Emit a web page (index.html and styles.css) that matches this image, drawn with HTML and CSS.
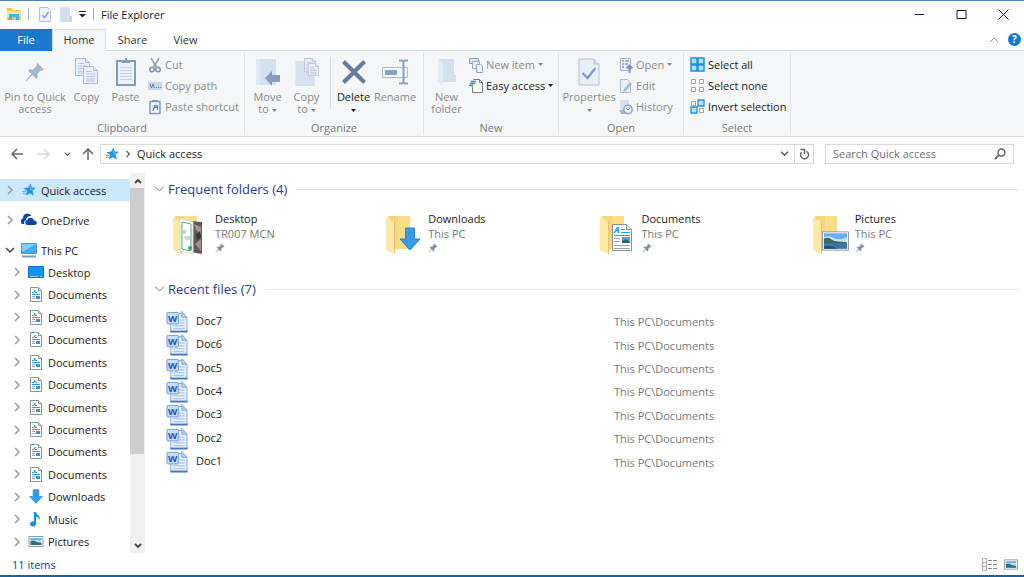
FILE: index.html
```html
<!DOCTYPE html>
<html lang="en">
<head>
    <meta charset="UTF-8">
    <meta name="viewport" content="width=device-width, initial-scale=1.0">
    <title>File Explorer</title>
    <link rel="stylesheet" href="styles.css">
</head>
<body>

<!-- icons used more than once -->
<svg class="sprite" aria-hidden="true">
    <symbol id="chevron" viewBox="0 0 8 10"><path d="M2 1l4 4-4 4" fill="none" stroke="currentColor" stroke-width="1.5"/></symbol>
    <symbol id="chevron-down" viewBox="0 0 10 8"><path d="M1 2l4 4 4-4" fill="none" stroke="currentColor" stroke-width="1.5"/></symbol>
    <symbol id="caret" viewBox="0 0 5 3"><path d="M0 0h5L2.5 3z" fill="currentColor"/></symbol>
    <symbol id="star" viewBox="0 0 14 14">
        <path d="M8.500.5l1.300 4 4 .2-3.300 3 1.300 5-4-2.500-4 2.500 1.200-4.700L1.500 5.200l4.700-.7z" fill="#2196e8"/>
        <path d="M8.300 2.500l.8 3.200 3 .2-4.200 1.600z" fill="#63bdf5"/>
        <path d="M0 8.500h4M1 10.500h3" stroke="#5fb4ee" stroke-width="1"/>
    </symbol>
    <symbol id="pin" viewBox="0 0 20 20">
        <path d="M12.500 1l6.500 6.500-2 1.200-1.200-.3-3.300 3.400.2 3.600-1.500 1.400-3.700-3.700L1.500 19l-.8-.6L6.500 12 3 8.600l1.500-1.300 3.700.2 3.300-3.400-.2-1.400z" fill="currentColor"/>
    </symbol>
    <symbol id="doc" viewBox="0 0 12 15">
        <path d="M.5.5h8l3 3v11H.5z" fill="#fff" stroke="#8b949b"/>
        <path d="M8.500.5v3h3" fill="#e4e8ea" stroke="#8b949b"/>
        <path d="M2 5.500h2l1-2.500v2.500h2M2 7.500h8" fill="none" stroke="#2f9be6"/>
        <path d="M6 9h4v3H6z" fill="#3f93cb"/>
        <path d="M2 9.500h3M2 11.500h3" stroke="#9aa5ac"/>
    </symbol>
    <symbol id="arrow-down" viewBox="0 0 22 24">
        <path d="M6.500 1h9v11h5.500L11 23 1 12h5.500z" fill="#379aea" stroke="#2484cf"/>
    </symbol>
    <symbol id="picture" viewBox="0 0 28 20">
        <path d="M.5.5h27v19H.5z" fill="#fff" stroke="#8e979e"/>
        <path d="M2 2h24v16H2z" fill="#6aaef0"/>
        <path d="M2 6q5-2 10 1t14-1v5H2z" fill="#c5e2f8"/>
        <path d="M2 7.500q4-2 7 .5t7 2.500 10 1v2H2z" fill="#3e6a5d"/>
        <path d="M2 12.500h24V18H2z" fill="#3879ad"/>
        <path d="M2 16q6-3 14 2H2z" fill="#23506c"/>
    </symbol>
    <symbol id="picture-small" viewBox="0 0 15 11">
        <path d="M.5.5h14v10H.5z" fill="#fff" stroke="#8e979e"/>
        <path d="M2 2h11v7H2z" fill="#b3dbf8"/>
        <path d="M2 2h11v2H2z" fill="#6db3ee"/>
        <path d="M2 5q4-1 6 1l5 1v2H2z" fill="#2f6d84"/>
    </symbol>
    <symbol id="folder" viewBox="0 0 26 40">
        <path d="M2 1h22v33H2z" fill="#f6d67a"/>
        <path d="M12 1h12v33H12z" fill="#f9dd89"/>
        <path d="M0 2l8 5v32l-8-4z" fill="#ffe9a6"/>
        <path d="M8 7v32l1-.5V6z" fill="#e8c265"/>
    </symbol>
    <symbol id="word" viewBox="0 0 22 23">
        <path d="M4.500 2.500h12l5 5v14h-17z" fill="#e6f0fc" stroke="#7fa3d6"/>
        <path d="M16 .5v6h5.500z" fill="#b8d1f2" stroke="#7fa3d6"/>
        <path d="M13 9.500h6M13 12.500h6M7 15.500h12M7 18.500h12" stroke="#9dbce6"/>
        <path d="M4 21.500h18" stroke="#4777bd" stroke-width="2"/>
        <rect x=".5" y="1.500" width="12" height="12" rx="1" fill="#c8dffa" stroke="#6f9bd8"/>
        <text x="6.500" y="11" class="word-letter" text-anchor="middle">W</text>
    </symbol>
    <symbol id="page" viewBox="0 0 16 18">
        <path d="M.5.5h10l4 4v13H.5z" fill="#eaf0f9" stroke="#a9bbd5"/>
        <path d="M10.500.5v4h4" fill="#dbe5f3" stroke="#a9bbd5"/>
        <path d="M3 5.500h6M3 8h9M3 10.500h9M3 13h9M3 15h9" stroke="#b4c6df"/>
    </symbol>
</svg>

<div class="window">
    <header class="titlebar">
        <svg class="app-icon" width="16" height="14" viewBox="0 0 16 14"><path d="M1 1h5l1 2h8v10H1z" fill="#f4c845"/><path d="M1 4h14v6H1z" fill="#ffe694"/><path d="M3 7h10v6h-3v-3H6v3H3z" fill="#3bb8dc"/></svg>
        <span class="divider"></span>
        <svg class="quick-icon" width="12" height="15" viewBox="0 0 12 15"><path d="M.5.5h8l3 3v11H.5z" fill="#edf2f9" stroke="#b0c0d8"/><path d="M3 8l2.500 2.500L9.500 5" fill="none" stroke="#8ea6c7" stroke-width="1.500"/></svg>
        <svg class="quick-icon" width="12" height="15" viewBox="0 0 12 15"><path d="M0 0h10v9h2v6H0z" fill="#d3deee"/><path d="M10.500 9v5.500" stroke="#b2c2da"/></svg>
        <svg class="quick-menu" width="7" height="7" viewBox="0 0 7 7"><path d="M0 .5h7" stroke="#222"/><path d="M0 3h7L3.500 6.500z" fill="#222"/></svg>
        <span class="divider"></span>
        <h1>File Explorer</h1>
        <div class="window-controls">
            <button aria-label="Minimize"><svg width="11" height="11" viewBox="0 0 11 11"><path d="M1 5.500h9" stroke="#111"/></svg></button>
            <button aria-label="Maximize"><svg width="11" height="11" viewBox="0 0 11 11"><path d="M1 1.500h9v8H1z" fill="none" stroke="#111"/></svg></button>
            <button aria-label="Close"><svg width="11" height="11" viewBox="0 0 11 11"><path d="M.5.5l10 10M10.500.5l-10 10" stroke="#111"/></svg></button>
        </div>
    </header>

    <nav class="tabs">
        <button class="tab file">File</button>
        <button class="tab active">Home</button>
        <button class="tab">Share</button>
        <button class="tab">View</button>
        <div class="tabs-right">
            <button class="collapse" aria-label="Minimize the Ribbon"><svg width="10" height="6" viewBox="0 0 10 6"><path d="M1 5l4-4 4 4" fill="none" stroke="#999"/></svg></button>
            <button aria-label="Help"><svg width="13" height="13" viewBox="0 0 13 13"><circle cx="6.500" cy="6.500" r="6.500" fill="#1177cf"/><text x="6.500" y="10" class="help-mark" text-anchor="middle">?</text></svg></button>
        </div>
    </nav>

    <div class="ribbon">
        <section class="group clipboard">
            <div class="group-body">
                <button class="big wide" disabled>
                    <svg class="big-icon pin-blue" width="20" height="20"><use href="#pin"/></svg>
                    <span>Pin to Quick<br>access</span>
                </button>
                <button class="big" disabled>
                    <svg class="big-icon" width="24" height="28" viewBox="0 0 24 28"><use href="#page" width="16" height="18"/><use href="#page" x="8" y="8" width="16" height="18"/></svg>
                    <span>Copy</span>
                </button>
                <button class="big" disabled>
                    <svg class="big-icon" width="20" height="28" viewBox="0 0 20 28"><rect x="1" y="3" width="18" height="24" fill="#fff" stroke="#839bc0" stroke-width="2"/><path d="M2 4h16v22H2z" fill="#edf2fa"/><path d="M6 5V2h3V0h2v2h3v3z" fill="#8299bd"/><path d="M4 9.500h12M4 12.500h12M4 15.500h12M4 18.500h12M4 21.500h12" stroke="#c4d1e5"/></svg>
                    <span>Paste</span>
                </button>
                <div class="stack">
                    <button class="small" disabled><svg width="14" height="16" viewBox="0 0 14 16"><path d="M3 1l6 10M11 1L5 11" stroke="#8ea1bf" stroke-width="1.500"/><circle cx="4" cy="12.500" r="2.300" fill="none" stroke="#7e95ba" stroke-width="1.500"/><circle cx="10" cy="12.500" r="2.300" fill="none" stroke="#7e95ba" stroke-width="1.500"/></svg>Cut</button>
                    <button class="small" disabled><svg width="14" height="16" viewBox="0 0 14 16"><path d="M0 4h14v8H0z" fill="#c8d6ea"/><path d="M2 6l1.500 4L5 6l1.500 4M8 9.500h1M10 9.500h1M12 9.500h1" fill="none" stroke="#6780a8"/></svg>Copy path</button>
                    <button class="small" disabled><svg width="14" height="16" viewBox="0 0 14 16"><path d="M2 2.500h10v12H2z" fill="#edf2fa" stroke="#839bc0" stroke-width="1.500"/><path d="M4 3V1h6v2z" fill="#8299bd"/><path d="M5 12c0-3 1-4 4-4M6 7h3.500v4" fill="none" stroke="#6f88b1" stroke-width="1.300"/></svg>Paste shortcut</button>
                </div>
            </div>
            <h2>Clipboard</h2>
        </section>

        <section class="group organize">
            <div class="group-body">
                <button class="big" disabled>
                    <svg class="big-icon move" width="26" height="28" viewBox="0 0 26 28"><path d="M1 1h20v26H1z" fill="#d6e1f0"/><path d="M1 1h4v26H1z" fill="#e0e9f5"/><path d="M10 20l7-7v4h8v7h-8v4z" fill="#869dbf"/></svg>
                    <span>Move<br>to <svg class="caret" width="5" height="3"><use href="#caret"/></svg></span>
                </button>
                <button class="big" disabled>
                    <svg class="big-icon" width="26" height="29" viewBox="0 0 26 29"><path d="M1 3h20v26H1z" fill="#d6e1f0"/><use href="#page" x="10" y="0" width="13" height="15"/><use href="#page" x="14" y="5" width="12" height="14"/></svg>
                    <span>Copy<br>to <svg class="caret" width="5" height="3"><use href="#caret"/></svg></span>
                </button>
                <span class="bar"></span>
                <button class="big">
                    <svg class="big-icon" width="26" height="26" viewBox="0 0 26 26"><path d="M2.500 2.500l21 21M23.500 2.500l-21 21" stroke="#647a9e" stroke-width="4"/></svg>
                    <span>Delete<br><svg class="caret" width="5" height="3"><use href="#caret"/></svg></span>
                </button>
                <button class="big rename" disabled>
                    <svg class="big-icon" width="26" height="26" viewBox="0 0 26 26"><path d="M.5 8.500h25v10H.5z" fill="#f4f7fb" stroke="#a9bbd5"/><path d="M3 11h12v5H3z" fill="#8aa2c6"/><path d="M17 1.500h3l1.500 1L23 1.500h3M21.500 2v22M17 24.500h3l1.500-1 1.500 1h3" fill="none" stroke="#889fc1" stroke-width="2"/></svg>
                    <span>Rename</span>
                </button>
            </div>
            <h2>Organize</h2>
        </section>

        <section class="group new">
            <div class="group-body">
                <button class="big" disabled>
                    <svg class="big-icon" width="18" height="26" viewBox="0 0 18 26"><path d="M1 0h15v16h2v7H1z" fill="#d5e0ef"/><path d="M0 1l5 3v22l-5-3z" fill="#e2eaf5"/></svg>
                    <span>New<br>folder</span>
                </button>
                <div class="stack">
                    <button class="small" disabled><svg width="14" height="16" viewBox="0 0 14 16"><path d="M.5 1.500h9v5h-9z" fill="#dbe5f3" stroke="#879dbf"/><path d="M3.500 4.500h7v7h-7z" fill="#e5edf8" stroke="#9caecb"/><path d="M7.500 7.500h4l2 2v6h-6z" fill="#eef3fa" stroke="#8fa5c6"/></svg>New item <svg class="caret" width="5" height="3"><use href="#caret"/></svg></button>
                    <button class="small"><svg width="14" height="16" viewBox="0 0 14 16"><path d="M4.500 1.500h6l3 3v10h-10v-6" fill="#fff" stroke="#7b7b7b"/><path d="M10.500 1.500v3h3" fill="none" stroke="#7b7b7b"/><path d="M2 3.500h5M1 5.500h5M0 7.500h4" stroke="#2a86d0" stroke-width="1.300"/></svg>Easy access <svg class="caret" width="5" height="3"><use href="#caret"/></svg></button>
                </div>
            </div>
            <h2>New</h2>
        </section>

        <section class="group open">
            <div class="group-body">
                <button class="big props" disabled>
                    <svg class="big-icon" width="22" height="28" viewBox="0 0 22 28"><path d="M1 1h15l5 5v21H1z" fill="#e9eff9" stroke="#b1c2dc"/><path d="M16 1v5h5" fill="#d9e4f3" stroke="#b1c2dc"/><path d="M4.500 15l5 5 8-10" fill="none" stroke="#8098bf" stroke-width="2.200"/></svg>
                    <span>Properties<br><svg class="caret" width="5" height="3"><use href="#caret"/></svg></span>
                </button>
                <div class="stack">
                    <button class="small" disabled><svg width="14" height="16" viewBox="0 0 14 16"><path d="M1.500 1.500h10v12h-10z" fill="#eaf0f9" stroke="#9fb2d0"/><path d="M3 4h2M3 7h2M3 10h2M6 4h4M6 7h3" stroke="#859cbf" stroke-width="1.500"/><path d="M10.500 16V9M7.500 11.500l3-3 3 3" fill="none" stroke="#788fb5" stroke-width="1.800"/></svg>Open <svg class="caret" width="5" height="3"><use href="#caret"/></svg></button>
                    <button class="small" disabled><svg width="14" height="16" viewBox="0 0 14 16"><path d="M1.500 1.500h7l3 3v10h-10z" fill="#eaf0f9" stroke="#a9bbd5"/><path d="M4 14l1-3 6-7 2 2-6 7z" fill="#a7bad6"/></svg>Edit</button>
                    <button class="small" disabled><svg width="14" height="16" viewBox="0 0 14 16"><path d="M1 1h9v10H1z" fill="#d6e1f0"/><path d="M0 11h7v4H2z" fill="#a6b9d5"/><circle cx="9" cy="10.500" r="4.200" fill="#e6edf7" stroke="#8da3c4" stroke-width="1.500"/><path d="M7 9l2 2 2.500-3" fill="none" stroke="#7b92b8"/></svg>History</button>
                </div>
            </div>
            <h2>Open</h2>
        </section>

        <section class="group select">
            <div class="group-body">
                <div class="stack">
                    <button class="small"><svg width="15" height="15" viewBox="0 0 15 15"><path d="M1 1h6v6H1zM8 1h6v6H8zM1 8h6v6H1zM8 8h6v6H8z" fill="#b6e1fb" stroke="#2490dc" stroke-width="1.500"/></svg>Select all</button>
                    <button class="small"><svg width="15" height="15" viewBox="0 0 15 15"><path d="M1.500 1.500h4v4h-4zM9.500 1.500h4v4h-4zM1.500 9.500h4v4h-4zM9.500 9.500h4v4h-4z" fill="#fff" stroke="#a0a0a0"/></svg>Select none</button>
                    <button class="small"><svg width="15" height="15" viewBox="0 0 15 15"><path d="M1.500 2.500h4v4h-4zM9.500 9.500h4v4h-4z" fill="#fff" stroke="#a0a0a0"/><path d="M8 1h6v6H8zM1 8h6v6H1z" fill="#b6e1fb" stroke="#2490dc" stroke-width="1.300"/></svg>Invert selection</button>
                </div>
            </div>
            <h2>Select</h2>
        </section>
    </div>

    <div class="navbar">
        <button class="nav-button" aria-label="Back"><svg width="12" height="12" viewBox="0 0 12 12"><path d="M12 6H1M6 1L1 6l5 5" fill="none" stroke="#666" stroke-width="1.500"/></svg></button>
        <button class="nav-button" aria-label="Forward" disabled><svg width="12" height="12" viewBox="0 0 12 12"><path d="M0 6h11M6 1l5 5-5 5" fill="none" stroke="#d8d8d8" stroke-width="1.500"/></svg></button>
        <button class="nav-button recent" aria-label="Recent locations"><svg width="7" height="6"><use href="#chevron-down"/></svg></button>
        <button class="nav-button up" aria-label="Up"><svg width="12" height="12" viewBox="0 0 12 12"><path d="M6 12V1M1 6l5-5 5 5" fill="none" stroke="#666" stroke-width="1.500"/></svg></button>
        <div class="address">
            <svg width="14" height="14"><use href="#star"/></svg>
            <svg class="crumb-arrow" width="6" height="8"><use href="#chevron"/></svg>
            <a href="#">Quick access</a>
            <button class="history" aria-label="Previous locations"><svg width="9" height="7"><use href="#chevron-down"/></svg></button>
            <button class="refresh" aria-label="Refresh"><svg width="11" height="12" viewBox="0 0 11 12"><path d="M7.500 3.300A4 4 0 1 1 2.500 4.200M1.500 1.500h4V6" fill="none" stroke="#666" stroke-width="1.500"/></svg></button>
        </div>
        <div class="search">
            <input id="search" type="text" placeholder="Search Quick access">
            <label for="search" aria-label="Search Quick access"><svg width="12" height="12" viewBox="0 0 12 12"><circle cx="7.500" cy="4.500" r="3.500" fill="none" stroke="#666" stroke-width="1.500"/><path d="M5 7l-4 4" stroke="#666" stroke-width="1.800"/></svg></label>
        </div>
    </div>

    <div class="main">
        <aside class="sidebar">
            <div class="tree">
                <a class="node root selected" href="#"><svg class="arrow" width="8" height="10"><use href="#chevron"/></svg><svg class="icon" width="16" height="14"><use href="#star"/></svg>Quick access</a>
                <a class="node root" href="#"><svg class="arrow" width="8" height="10"><use href="#chevron"/></svg><svg class="icon" width="16" height="16" viewBox="0 0 16 16"><path d="M1 12a3 3 0 0 1 1-5.500A4.500 4.500 0 0 1 10.500 4 5 5 0 0 0 5 8a3 3 0 0 0-1.500 4z" fill="#0a4aa3"/><path d="M6 13a2.600 2.600 0 0 1 .2-5A3.600 3.600 0 0 1 13 8.500a2.300 2.300 0 0 1 1 4.500z" fill="#0a4aa3"/></svg>OneDrive</a>
                <a class="node root" href="#"><svg class="arrow open-arrow" width="10" height="8"><use href="#chevron-down"/></svg><svg class="icon" width="16" height="16" viewBox="0 0 16 16"><path d="M.5 1.500h15v10H.5z" fill="#3ab0f0" stroke="#5a8db3"/><path d="M1 2h14L1 10z" fill="#7dd0fa"/><path d="M1 14.500h14" stroke="#7e9dbd" stroke-width="2"/></svg>This PC</a>
                <div class="children">
                    <a class="node" href="#"><svg class="arrow" width="8" height="10"><use href="#chevron"/></svg><svg class="icon" width="16" height="12" viewBox="0 0 16 12"><path d="M.5.5h15v11H.5z" fill="#1292f5" stroke="#0d70cf"/><path d="M2 10.500h8M12 10.500h2" stroke="#9ad2fb"/></svg>Desktop</a>
                    <a class="node" href="#"><svg class="arrow" width="8" height="10"><use href="#chevron"/></svg><svg class="icon" width="16" height="15"><use href="#doc"/></svg>Documents</a>
                    <a class="node" href="#"><svg class="arrow" width="8" height="10"><use href="#chevron"/></svg><svg class="icon" width="16" height="15"><use href="#doc"/></svg>Documents</a>
                    <a class="node" href="#"><svg class="arrow" width="8" height="10"><use href="#chevron"/></svg><svg class="icon" width="16" height="15"><use href="#doc"/></svg>Documents</a>
                    <a class="node" href="#"><svg class="arrow" width="8" height="10"><use href="#chevron"/></svg><svg class="icon" width="16" height="15"><use href="#doc"/></svg>Documents</a>
                    <a class="node" href="#"><svg class="arrow" width="8" height="10"><use href="#chevron"/></svg><svg class="icon" width="16" height="15"><use href="#doc"/></svg>Documents</a>
                    <a class="node" href="#"><svg class="arrow" width="8" height="10"><use href="#chevron"/></svg><svg class="icon" width="16" height="15"><use href="#doc"/></svg>Documents</a>
                    <a class="node" href="#"><svg class="arrow" width="8" height="10"><use href="#chevron"/></svg><svg class="icon" width="16" height="15"><use href="#doc"/></svg>Documents</a>
                    <a class="node" href="#"><svg class="arrow" width="8" height="10"><use href="#chevron"/></svg><svg class="icon" width="16" height="15"><use href="#doc"/></svg>Documents</a>
                    <a class="node" href="#"><svg class="arrow" width="8" height="10"><use href="#chevron"/></svg><svg class="icon" width="16" height="15"><use href="#doc"/></svg>Documents</a>
                    <a class="node" href="#"><svg class="arrow" width="8" height="10"><use href="#chevron"/></svg><svg class="icon" width="16" height="15"><use href="#arrow-down"/></svg>Downloads</a>
                    <a class="node" href="#"><svg class="arrow" width="8" height="10"><use href="#chevron"/></svg><svg class="icon" width="16" height="16" viewBox="0 0 16 16"><path d="M6 1h2c.5 3 4.500 3.500 4 8-1-2-2-3-4-3v6.500A3 2.600 0 1 1 6 10.500z" fill="#1492ea"/></svg>Music</a>
                    <a class="node" href="#"><svg class="arrow" width="8" height="10"><use href="#chevron"/></svg><svg class="icon" width="16" height="11"><use href="#picture-small"/></svg>Pictures</a>
                </div>
            </div>
            <div class="scrollbar">
                <button aria-label="Scroll up"><svg width="8" height="6" viewBox="0 0 8 6"><path d="M1 5l3-3 3 3" fill="none" stroke="#444" stroke-width="1.800"/></svg></button>
                <div class="track"><div class="thumb"></div></div>
                <button aria-label="Scroll down"><svg width="8" height="6" viewBox="0 0 8 6"><path d="M1 1l3 3 3-3" fill="none" stroke="#444" stroke-width="1.800"/></svg></button>
            </div>
        </aside>

        <main class="content">
            <button class="section-title"><svg width="11" height="8" viewBox="0 0 11 8"><path d="M1 1.500l4.500 4.500L10 1.500" fill="none" stroke="#777"/></svg>Frequent folders (4)</button>
            <div class="folders">
                <a class="folder" href="#">
                    <svg class="folder-icon" width="40" height="42" viewBox="0 0 40 42"><use href="#folder" x="1" y="1" width="26" height="40"/><path d="M18 7l12 1v32l-12-2z" fill="#5d5a58"/><path d="M22 10l7 3v8l-5-5zM23 30l6-5v12z" fill="#a39391"/><path d="M24 21l4-4 1 6-4 3z" fill="#343a35"/><path d="M8 4l13 4v32L8 37z" fill="#fff" stroke="#cfd6cf"/><path d="M10 8l9 2v27l-9-2z" fill="none" stroke="#4dae7b"/><path d="M11 17h4M11 19h3M12 23h6M13 25h5" stroke="#89bd9f" fill="none"/><circle cx="18" cy="34" r="2" fill="#35a96a"/></svg>
                    <span class="folder-text"><span>Desktop</span><span class="muted">TR007 MCN</span><svg class="pinned" width="10" height="10"><use href="#pin"/></svg></span>
                </a>
                <a class="folder" href="#">
                    <svg class="folder-icon" width="40" height="42" viewBox="0 0 40 42"><use href="#folder" x="1" y="1" width="26" height="40"/><use href="#arrow-down" x="14" y="13" width="22" height="24"/></svg>
                    <span class="folder-text"><span>Downloads</span><span class="muted">This PC</span><svg class="pinned" width="10" height="10"><use href="#pin"/></svg></span>
                </a>
                <a class="folder" href="#">
                    <svg class="folder-icon" width="40" height="42" viewBox="0 0 40 42"><use href="#folder" x="1" y="1" width="26" height="40"/><path d="M13.500 10.500h14l5 5v21h-19z" fill="#fff" stroke="#858e95"/><path d="M27.500 10.500v5h5" fill="#e4e8ea" stroke="#858e95"/><text x="15" y="19" class="doc-letter">A</text><path d="M22 15.500h4M22 18.500h9M15 21.500h16" stroke="#2f9be6"/><path d="M23 23h8v6h-8z" fill="#5aa5d8"/><path d="M23 27l4-2 4 3v1h-8z" fill="#2c6568"/><path d="M15 24.500h6M15 27.500h6M15 31.500h16M15 34.500h16" stroke="#9aa5ac"/></svg>
                    <span class="folder-text"><span>Documents</span><span class="muted">This PC</span><svg class="pinned" width="10" height="10"><use href="#pin"/></svg></span>
                </a>
                <a class="folder" href="#">
                    <svg class="folder-icon" width="40" height="42" viewBox="0 0 40 42"><use href="#folder" x="1" y="1" width="26" height="40"/><use href="#picture" x="10" y="17" width="27" height="20"/></svg>
                    <span class="folder-text"><span>Pictures</span><span class="muted">This PC</span><svg class="pinned" width="10" height="10"><use href="#pin"/></svg></span>
                </a>
            </div>

            <button class="section-title"><svg width="11" height="8" viewBox="0 0 11 8"><path d="M1 1.500l4.500 4.500L10 1.500" fill="none" stroke="#777"/></svg>Recent files (7)</button>
            <table class="files">
                <tr><td class="name"><svg width="22" height="22"><use href="#word"/></svg>Doc7</td><td>This PC\Documents</td></tr>
                <tr><td class="name"><svg width="22" height="22"><use href="#word"/></svg>Doc6</td><td>This PC\Documents</td></tr>
                <tr><td class="name"><svg width="22" height="22"><use href="#word"/></svg>Doc5</td><td>This PC\Documents</td></tr>
                <tr><td class="name"><svg width="22" height="22"><use href="#word"/></svg>Doc4</td><td>This PC\Documents</td></tr>
                <tr><td class="name"><svg width="22" height="22"><use href="#word"/></svg>Doc3</td><td>This PC\Documents</td></tr>
                <tr><td class="name"><svg width="22" height="22"><use href="#word"/></svg>Doc2</td><td>This PC\Documents</td></tr>
                <tr><td class="name"><svg width="22" height="22"><use href="#word"/></svg>Doc1</td><td>This PC\Documents</td></tr>
            </table>
        </main>
    </div>

    <footer class="statusbar">
        <span>11 items</span>
        <div class="views">
            <button aria-label="Details view"><svg width="15" height="13" viewBox="0 0 15 13"><path d="M.5.5h4v12h-4zM.5 4.500h4M.5 8.500h4" fill="#fff" stroke="#aaa"/><path d="M6 2.500h4M11 2.500h4M6 6.500h4M11 6.500h4M6 10.500h4M11 10.500h4" stroke="#888"/></svg></button>
            <button aria-label="Large thumbnails view"><svg width="14" height="11"><use href="#picture-small"/></svg></button>
        </div>
    </footer>
</div>

</body>
</html>
```

FILE: styles.css
```css
* {
    box-sizing: border-box;
}
body {
    margin: 0;
    font-family: "Open Sans", "Noto Sans", sans-serif;
    font-size: 11px;
    line-height: 15px;
    color: #1a1a1a;
    background-color: #fff;
}
button {
    padding: 0;
    border: none;
    background: none;
    font: inherit;
    color: inherit;
}
a {
    color: inherit;
    text-decoration: none;
}
h1, h2 {
    margin: 0;
    font-size: 11px;
    font-weight: normal;
}
svg {
    display: block;
    flex: none;
}
.sprite {
    display: none;
}
.window {
    display: flex;
    flex-direction: column;
    min-height: 100vh;
    border-top: 1px solid #4a86c0;
    border-bottom: 2px solid #17649c;
}

/* title bar */
.titlebar {
    display: flex;
    align-items: center;
    height: 28px;
    padding: 0 0 2px 6px;
}
.divider {
    width: 1px;
    height: 12px;
    margin: 0 10px 0 6px;
    background-color: #aaa;
}
.quick-icon {
    margin-right: 9px;
}
.quick-menu {
    margin-left: -2px;
}
.quick-menu + .divider {
    margin: 0 7px;
}
.window-controls {
    display: flex;
    margin-left: auto;
}
.window-controls button {
    display: flex;
    justify-content: center;
    align-items: center;
    width: 42px;
    height: 26px;
}

/* tabs */
.tabs {
    display: flex;
    height: 22px;
}
.tab {
    width: 53px;
    padding-bottom: 1px;
    border-bottom: 1px solid #dadbdc;
    color: #333;
}
.tab.file {
    width: 52px;
    border-color: #1979ca;
    background-color: #1979ca;
    color: #fff;
}
.tab.active {
    width: 54px;
    border: 1px solid #dadbdc;
    border-bottom-color: #f5f6f7;
    background-color: #f5f6f7;
}
.tabs-right {
    display: flex;
    flex: 1;
    justify-content: flex-end;
    align-items: center;
    gap: 9px;
    padding-right: 3px;
    border-bottom: 1px solid #dadbdc;
}
.help-mark {
    font-size: 10px;
    font-weight: bold;
    fill: #fff;
}

/* ribbon */
.ribbon {
    display: flex;
    height: 86px;
    padding-top: 2px;
    border-bottom: 1px solid #dadbdc;
    background-color: #f5f6f7;
}
.group {
    display: flex;
    flex-direction: column;
    justify-content: space-between;
    height: 82px;
    padding: 0 3px;
    border-right: 1px solid #e2e3e4;
}
.group h2 {
    line-height: 14px;
    text-align: center;
    color: #777;
}
.clipboard {
    width: 245px;
}
.organize {
    width: 179px;
}
.new {
    width: 135px;
}
.open {
    width: 125px;
}
.select {
    width: 107px;
}
.group-body {
    display: flex;
}
.big {
    display: flex;
    flex-direction: column;
    align-items: center;
    width: 39px;
    padding-top: 5px;
    line-height: 12px;
    white-space: nowrap;
}
.big.wide {
    width: 64px;
}
.big.props {
    width: 54px;
}
.big.rename {
    width: 44px;
}
.big-icon {
    height: 28px;
    margin-bottom: 5px;
}
.pin-blue {
    color: #a5b6cf;
}
button:disabled {
    color: #8a8a8a;
}
.caret {
    display: inline-block;
    vertical-align: middle;
}
.bar {
    width: 1px;
    height: 52px;
    margin: 4px 3px 4px 4px;
    background-color: #dcdddf;
}
.stack {
    display: flex;
    flex-direction: column;
    padding: 1px 0 0 3px;
}
.small {
    display: flex;
    align-items: center;
    gap: 3px;
    height: 21px;
    white-space: nowrap;
}

/* address row */
.navbar {
    display: flex;
    align-items: center;
    height: 34px;
    padding: 0 10px;
}
.nav-button {
    display: flex;
    justify-content: center;
    width: 14px;
    margin-right: 13px;
    color: #666;
}
.nav-button.recent {
    width: 8px;
    margin: 0 10px 0 -1px;
}
.nav-button.up {
    margin-right: 5px;
}
.address {
    display: flex;
    flex: 1;
    align-items: center;
    height: 20px;
    padding: 0 0 1px 4px;
    border: 1px solid #d9d9d9;
}
.crumb-arrow {
    margin: 0 6px;
    color: #555;
}
.history {
    margin: 0 5px 0 auto;
    color: #555;
}
.refresh {
    display: flex;
    justify-content: center;
    align-items: center;
    width: 19px;
    height: 18px;
    border-left: 1px solid #d9d9d9;
}
.search {
    display: flex;
    align-items: center;
    width: 189px;
    height: 20px;
    margin-left: 11px;
    padding: 0 7px 1px;
    border: 1px solid #d9d9d9;
}
.search input {
    flex: 1;
    min-width: 0;
    padding: 0;
    border: none;
    outline: none;
    font: inherit;
}
.search input::placeholder {
    color: #6d6d6d;
    opacity: 1;
}

/* folder tree */
.main {
    display: flex;
    flex: 1;
}
.sidebar {
    display: flex;
    width: 145px;
    padding-top: 2px;
}
.tree {
    display: flex;
    flex: 1;
    flex-direction: column;
    gap: 8px;
    padding-top: 6px;
}
.node {
    display: flex;
    align-items: center;
    height: 22px;
    padding-left: 5px;
}
.node.selected {
    background-color: #cce8ff;
}
.children {
    display: flex;
    flex: 1;
    flex-direction: column;
    margin-top: -8px;
}
.children .node {
    flex: 1;
    padding-left: 12px;
}
.arrow {
    width: 10px;
    color: #999;
}
.open-arrow {
    color: #444;
}
.node .icon {
    width: 16px;
    margin: 0 4px 0 6px;
}
.scrollbar {
    display: flex;
    flex-direction: column;
    width: 15px;
    background-color: #f0f0f0;
}
.scrollbar button {
    display: flex;
    justify-content: center;
    align-items: center;
    height: 15px;
}
.track {
    flex: 1;
    padding-right: 1px;
}
.thumb {
    height: 76%;
    background-color: #cdcdcd;
}

/* file area */
.content {
    flex: 1;
    padding: 8px 6px 0 9px;
}
.section-title {
    display: flex;
    align-items: center;
    gap: 3px;
    width: 100%;
    font-size: 13px;
    line-height: 20px;
    color: #25408f;
}
.section-title::after {
    content: "";
    flex: 1;
    height: 1px;
    margin-left: 6px;
    background-color: #e8e8e8;
}
.folders {
    display: grid;
    grid-template-columns: repeat(4, 1fr);
    padding: 12px 0 23px 11px;
}
.folder {
    display: flex;
    gap: 3px;
    padding-left: 7px;
}
.folder-icon {
    margin-top: 3px;
}
.folder-text {
    display: flex;
    flex-direction: column;
}
.muted {
    color: #777;
}
.pinned {
    margin-top: 2px;
    color: #87919b;
}
.files {
    width: 100%;
    height: 164px;
    margin-top: 11px;
    border-collapse: collapse;
    table-layout: fixed;
}
.files td {
    padding: 0;
    color: #777;
}
.files .name {
    width: 460px;
    padding-left: 12px;
    color: #1a1a1a;
}
.files svg {
    display: inline-block;
    margin-right: 8px;
    vertical-align: middle;
}
.word-letter {
    font-size: 10px;
    font-weight: bold;
    fill: #1c58b0;
}
.doc-letter {
    font-size: 9px;
    font-style: italic;
    font-weight: bold;
    fill: #2087d6;
}

/* status bar */
.statusbar {
    display: flex;
    justify-content: space-between;
    align-items: center;
    height: 22px;
    padding: 0 6px 0 12px;
    color: #25408f;
}
.views {
    display: flex;
    align-items: center;
    gap: 7px;
}
```
